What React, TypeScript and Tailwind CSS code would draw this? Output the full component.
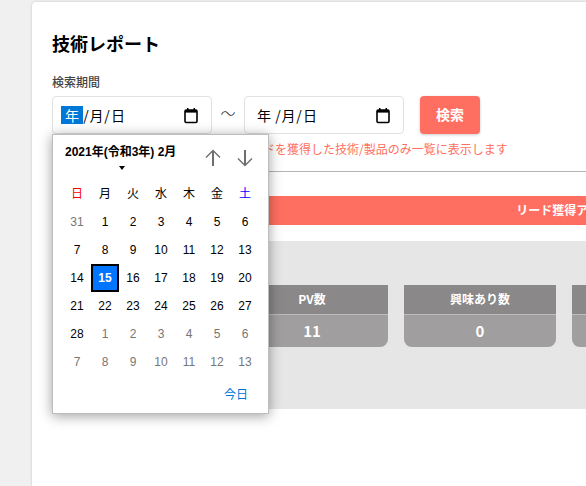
const weekdays = [
  { label: "日", color: "text-[#ff0000]" },
  { label: "月", color: "text-black" },
  { label: "火", color: "text-black" },
  { label: "水", color: "text-black" },
  { label: "木", color: "text-black" },
  { label: "金", color: "text-black" },
  { label: "土", color: "text-[#0000ff]" },
];

// leading/trailing days belong to the neighbouring months and are greyed out
const days = [
  { n: 31, muted: true },
  ...Array.from({ length: 28 }, (_, i) => ({ n: i + 1, muted: false })),
  ...Array.from({ length: 13 }, (_, i) => ({ n: i + 1, muted: true })),
];

const stats = [
  { label: "", value: "" },
  { label: "PV数", value: "11" },
  { label: "興味あり数", value: "0" },
  { label: "", value: "" },
];

function CalendarIcon() {
  return (
    <svg width="16" height="17" viewBox="0 0 16 17" fill="none">
      <rect x="2" y="3" width="12" height="12.5" rx="1.2" stroke="#000" strokeWidth="1.6" />
      <rect x="2" y="3" width="12" height="2.6" fill="#000" />
      <rect x="4" y="1" width="1.5" height="2.5" fill="#000" />
      <rect x="10.5" y="1" width="1.5" height="2.5" fill="#000" />
    </svg>
  );
}

function DateField({ active }: { active?: boolean }) {
  return (
    <div className="flex h-[38px] w-[160px] items-center justify-between rounded-[4px] border border-[#e2e2e2] bg-white pl-[8px] pr-[12px] text-[14px] text-black">
      <div className="flex items-center">
        <span
          className={
            active
              ? "flex h-[18px] w-[22px] items-center justify-center bg-[#0078d7] text-white"
              : "flex h-[18px] w-[22px] items-center justify-center"
          }
        >
          年
        </span>
        <span className="w-[6px] text-center">/</span>
        <span className="w-[15px] text-center">月</span>
        <span className="w-[6px] text-center">/</span>
        <span className="w-[16px] text-center">日</span>
      </div>
      <CalendarIcon />
    </div>
  );
}

function Arrow({ down }: { down?: boolean }) {
  return (
    <svg width="18" height="18" viewBox="0 0 18 18" fill="none" stroke="#6e6e6e">
      {down ? (
        <>
          <path d="M9 1V16" strokeWidth="2" />
          <path d="M2 9.5L9 16.5l7-7" strokeWidth="1.4" />
        </>
      ) : (
        <>
          <path d="M9 17V2" strokeWidth="2" />
          <path d="M2 8.5L9 1.5l7 7" strokeWidth="1.4" />
        </>
      )}
    </svg>
  );
}

function CalendarPopup() {
  return (
    <div className="absolute left-0 top-[38px] z-10 h-[280px] w-[217px] border border-[#bdbdbd] bg-white font-['Liberation_Sans','Noto_Sans_CJK_JP',sans-serif] shadow-[0_2px_12px_rgba(0,0,0,0.38)]">
      <div className="flex h-[45px] items-start justify-between pl-[12px] pr-[14px]">
        <div className="pt-[9px] text-[12px] font-bold leading-[17px] text-black">
          2021年(令和3年) 2月
          <div className="ml-[54px] mt-[5px] h-0 w-0 border-x-[3.5px] border-t-[4px] border-x-transparent border-t-black" />
        </div>
        <div className="flex gap-[14px] pt-[14px]">
          <Arrow />
          <Arrow down />
        </div>
      </div>
      <div className="ml-[10px] grid w-[196px] grid-cols-7 text-[12px]">
        {weekdays.map((d) => (
          <div key={d.label} className={`flex h-[28px] items-center justify-center ${d.color}`}>
            {d.label}
          </div>
        ))}
        {days.map((d, i) =>
          d.n === 15 && !d.muted ? (
            <div
              key={i}
              className="flex h-[28px] items-center justify-center border-2 border-black bg-[#0075ff] font-bold text-white"
            >
              {d.n}
            </div>
          ) : (
            <div
              key={i}
              className={
                d.muted
                  ? "flex h-[28px] items-center justify-center text-[#767676]"
                  : "flex h-[28px] items-center justify-center text-black"
              }
            >
              {d.n}
            </div>
          ),
        )}
      </div>
      <div className="flex justify-end pr-[20px] pt-[10px] text-[12px] leading-[18px] text-[#0075d9]">
        今日
      </div>
    </div>
  );
}

export default function App() {
  return (
    <div className="h-[486px] w-[586px] overflow-hidden bg-[#f0f0f0] pt-[2px] pl-[32px] font-['Noto_Sans_CJK_JP','Noto_Sans',sans-serif]">
      <div className="h-[600px] w-[1088px] rounded-[4px] bg-white px-[20px] pt-[27px] shadow-[0_0_3px_rgba(0,0,0,0.18)]">
        <h1 className="text-[18px] font-bold leading-[28px] text-black">技術レポート</h1>

        <div className="mt-[16px] text-[12px] font-medium leading-[18px] text-[#444]">検索期間</div>

        <div className="mt-[5px] flex items-center">
          <div className="relative">
            <DateField active />
            <CalendarPopup />
          </div>
          <span className="w-[32px] pb-[3px] text-center text-[15px] font-light text-[#333]">〜</span>
          <DateField />
          <button className="ml-[16px] h-[38px] w-[60px] rounded-[4px] bg-[#ff6f61] pb-[2px] text-[14px] font-bold text-white shadow-[0_1px_3px_rgba(0,0,0,0.2)]">
            検索
          </button>
        </div>

        {/* start of this line sits behind the calendar popup */}
        <p className="mt-[6px] pl-[187px] text-[12px] leading-[18px] text-[#ff6f61]">
          リードを獲得した技術/製品のみ一覧に表示します
        </p>

        <hr className="mt-[13px] border-t border-[#b4b4b4]" />

        <div className="mt-[24px] flex h-[29px] items-center justify-center bg-[#ff6f61] pb-[2px] text-[12px] font-bold text-white">
          リード獲得アクション
        </div>

        <div className="mt-[16px] flex h-[168px] items-start gap-[16px] bg-[#e6e6e6] px-[16px] pt-[44px]">
          {stats.map((s, i) => (
            <div key={i} className="w-[152px] overflow-hidden rounded-b-[8px] text-white">
              <div className="flex h-[29px] items-center justify-center bg-[#8a8888] pb-px text-[12px] font-bold">
                {s.label}
              </div>
              <div className="flex h-[33px] items-center justify-center border-t border-[#bdbcbc] bg-[#a09e9e] text-[15px] font-bold">
                {s.value}
              </div>
            </div>
          ))}
        </div>
      </div>
    </div>
  );
}
